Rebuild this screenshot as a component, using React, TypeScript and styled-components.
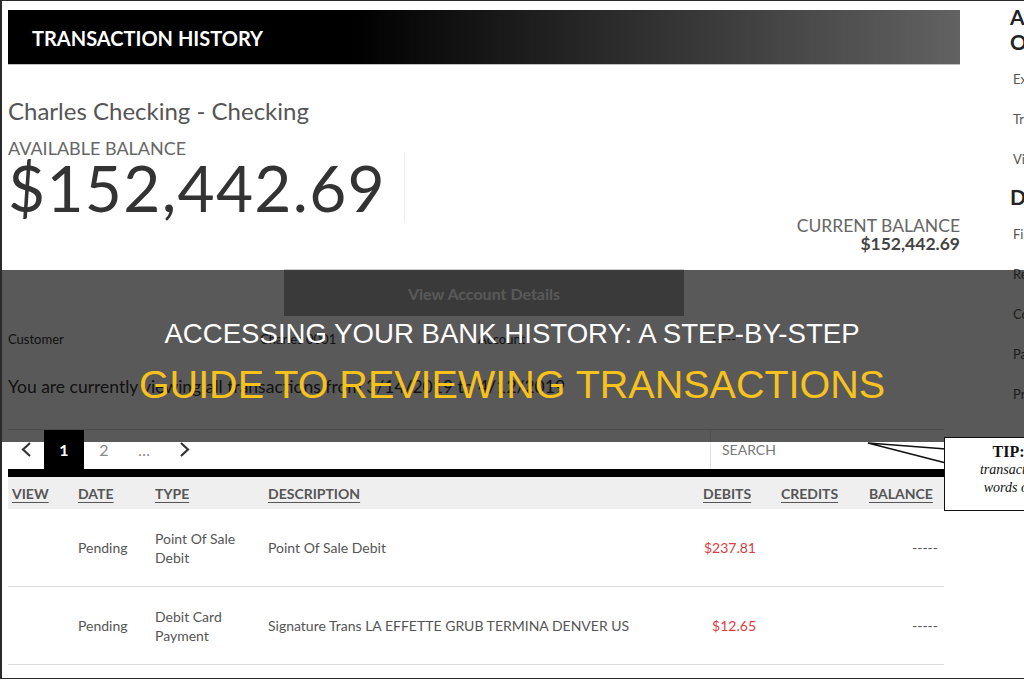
import React from "react";
import styled, { createGlobalStyle } from "styled-components";

const GlobalStyle = createGlobalStyle`
  html, body {
    margin: 0;
    padding: 0;
    overflow: hidden;
    background: #fff;
  }
  body {
    font-family: Lato, "Open Sans", sans-serif;
  }
  * {
    box-sizing: border-box;
  }
`;

const Page = styled.div`
  position: relative;
  display: flex;
  width: 1024px;
  height: 679px;
  border-top: 1px solid #2a2a2a;
  border-left: 2px solid #2a2a2a;
  border-bottom: 1px solid #2a2a2a;
  overflow: hidden;
  background: #fff;
`;

const Main = styled.main`
  display: flex;
  flex-direction: column;
  width: 952px;
  margin: 9px 0 0 6px;
  flex-shrink: 0;
`;

const HeaderBar = styled.header`
  display: flex;
  align-items: center;
  height: 55px;
  padding: 2px 0 0 24px;
  background: linear-gradient(90deg, #000 0%, #000 36%, #1e1e1e 55%, #444 80%, #626262 100%);
  border-bottom: 1px solid #bdbdbd;
  color: #fff;
  font-size: 20px;
  font-weight: 700;
`;

const AccountName = styled.h1`
  margin: 31px 0 0;
  font-size: 24px;
  line-height: 30px;
  font-weight: 400;
  color: #555;
`;

const Label = styled.div`
  margin-top: 13px;
  font-size: 18px;
  line-height: 18px;
  color: #666;
`;

const BalanceRow = styled.div`
  display: flex;
  align-items: flex-start;
`;

const BigAmount = styled.div`
  font-size: 64px;
  line-height: 62px;
  color: #333;
  letter-spacing: 1.3px;
`;

const Divider = styled.div`
  width: 1px;
  height: 70px;
  margin: -5px 0 0 18px;
  background: #ececec;
`;

const CurrentBalance = styled.div`
  margin-left: auto;
  padding-top: 60px;
  text-align: right;
  font-size: 17.5px;
  line-height: 17.5px;
  color: #666;

  strong {
    display: block;
    color: #444;
  }
`;

const DetailsButton = styled.button`
  align-self: center;
  width: 400px;
  height: 47px;
  margin-top: 17px;
  border: none;
  border-top: 1px solid #d0d0d0;
  background: #a6a6a6;
  color: #fff;
  font-family: Lato, sans-serif;
  font-size: 16px;
  font-weight: 700;
`;

const InfoRow = styled.div`
  display: flex;
  margin-top: 15px;
  font-size: 13px;
  line-height: 16px;
  color: #333;
`;

const InfoCell = styled.span<{ $w: number }>`
  width: ${(p) => p.$w}px;
`;

const Notice = styled.p`
  margin: 29px 0 0;
  font-size: 17.5px;
  line-height: 22px;
  color: #333;
`;

const Pager = styled.nav`
  display: flex;
  align-items: center;
  width: 936px;
  height: 40px;
  margin-top: 31px;
  border-top: 1px solid #d6d6d6;
`;

const PageCell = styled.span<{ $active?: boolean; $w?: number }>`
  display: flex;
  align-items: center;
  justify-content: center;
  width: ${(p) => p.$w ?? 40}px;
  height: 40px;
  font-size: 16px;
  font-weight: ${(p) => (p.$active ? 700 : 400)};
  color: ${(p) => (p.$active ? "#fff" : "#888")};
  background: ${(p) => (p.$active ? "#000" : "transparent")};
`;

const Search = styled.div`
  display: flex;
  align-items: center;
  width: 234px;
  height: 40px;
  margin-left: auto;
  padding: 0 0 0 11px;
  border-left: 1px solid #e2e2e2;
  font-size: 14px;
  color: #777;
`;

const Table = styled.div`
  width: 936px;
  border-top: 8px solid #000;
`;

const Row = styled.div<{ $head?: boolean }>`
  display: grid;
  grid-template-columns: 66px 77px 113px 435px 78px 88px 79px;
  align-items: center;
  height: ${(p) => (p.$head ? 32 : 78)}px;
  background: ${(p) => (p.$head ? "#efefef" : "#fff")};
  border-bottom: ${(p) => (p.$head ? "none" : "1px solid #dcdcdc")};
  font-size: 14px;
  line-height: 19px;
  color: #555;
`;

const HeadCell = styled.span`
  padding-left: 4px;
  font-weight: 700;
  text-decoration: underline;
  text-underline-offset: 3px;
`;

const Cell = styled.span<{ $right?: boolean; $red?: boolean; $pr?: number }>`
  padding-left: 4px;
  padding-right: ${(p) => p.$pr ?? 0}px;
  text-align: ${(p) => (p.$right ? "right" : "left")};
  color: ${(p) => (p.$red ? "#e03a3e" : "inherit")};
`;

const Sidebar = styled.aside`
  width: 110px;
  margin-left: 50px;
  padding-top: 3px;
  flex-shrink: 0;
`;

const SideHeading = styled.h2`
  margin: 0;
  font-size: 21px;
  line-height: 25px;
  font-weight: 700;
  color: #222;

  & + ul {
    margin-top: 17px;
  }
`;

const SideList = styled.ul`
  display: flex;
  flex-direction: column;
  gap: 24px;
  margin: 0 0 17px;
  padding: 0 0 0 3px;
  list-style: none;
  font-size: 13px;
  line-height: 16px;
  color: #555;
  white-space: nowrap;
`;

const Overlay = styled.div`
  position: absolute;
  top: 269px;
  left: -2px;
  right: 0;
  height: 172px;
  display: flex;
  flex-direction: column;
  align-items: center;
  justify-content: center;
  gap: 13px;
  padding-top: 10px;
  background: rgba(0, 0, 0, 0.65);
  font-family: "Liberation Sans", Arial, sans-serif;
  text-align: center;
`;

const OverlayTitle = styled.div`
  font-size: 27.6px;
  line-height: 32px;
  color: #fff;
`;

const OverlaySub = styled.div`
  font-size: 39.5px;
  line-height: 42px;
  color: #f8c21c;
`;

const TipBox = styled.div`
  position: absolute;
  top: 436px;
  left: 942px;
  width: 180px;
  height: 74px;
  padding-top: 5px;
  border: 1.5px solid #111;
  background: #fff;
  font-family: "Liberation Serif", "Times New Roman", serif;
  text-align: center;
  color: #111;
  font-size: 14px;
  line-height: 18px;

  b {
    display: block;
    font-size: 16px;
  }

  i {
    display: block;
  }
`;

const TipPointer = styled.svg`
  position: absolute;
  top: 440px;
  left: 864px;
`;

function Chevron({ dir }: { dir: "left" | "right" }) {
  const d = dir === "left" ? "M9 1 L2 7.5 L9 14" : "M2 1 L9 7.5 L2 14";
  return (
    <svg width="11" height="15" viewBox="0 0 11 15">
      <path d={d} fill="none" stroke="#333" strokeWidth="2.2" />
    </svg>
  );
}

const transactions = [
  {
    date: "Pending",
    type: ["Point Of Sale", "Debit"],
    desc: "Point Of Sale Debit",
    debit: "$237.81",
    balance: "-----",
  },
  {
    date: "Pending",
    type: ["Debit Card", "Payment"],
    desc: "Signature Trans LA EFFETTE GRUB TERMINA DENVER US",
    debit: "$12.65",
    balance: "-----",
  },
];

export default function App() {
  return (
    <>
      <GlobalStyle />
      <Page>
        <Main>
          <HeaderBar>TRANSACTION HISTORY</HeaderBar>
          <AccountName>Charles Checking - Checking</AccountName>
          <Label>AVAILABLE BALANCE</Label>
          <BalanceRow>
            <BigAmount>$152,442.69</BigAmount>
            <Divider />
            <CurrentBalance>
              CURRENT BALANCE
              <strong>$152,442.69</strong>
            </CurrentBalance>
          </BalanceRow>
          <DetailsButton>View Account Details</DetailsButton>
          <InfoRow>
            <InfoCell $w={252}>Customer</InfoCell>
            <InfoCell $w={218}>Charles 0001</InfoCell>
            <InfoCell $w={234}>Account</InfoCell>
            <InfoCell $w={100}>-----</InfoCell>
          </InfoRow>
          <Notice>
            You are currently viewing all transactions from 3/14/2019 to 4/12/2019
          </Notice>
          <Pager>
            <PageCell $w={36}>
              <Chevron dir="left" />
            </PageCell>
            <PageCell $active>1</PageCell>
            <PageCell>2</PageCell>
            <PageCell>…</PageCell>
            <PageCell>
              <Chevron dir="right" />
            </PageCell>
            <Search>SEARCH</Search>
          </Pager>
          <Table>
            <Row $head>
              <HeadCell>VIEW</HeadCell>
              <HeadCell>DATE</HeadCell>
              <HeadCell>TYPE</HeadCell>
              <HeadCell>DESCRIPTION</HeadCell>
              <HeadCell>DEBITS</HeadCell>
              <HeadCell>CREDITS</HeadCell>
              <HeadCell>BALANCE</HeadCell>
            </Row>
            {transactions.map((t) => (
              <Row key={t.desc}>
                <Cell />
                <Cell>{t.date}</Cell>
                <Cell>
                  {t.type[0]}
                  <br />
                  {t.type[1]}
                </Cell>
                <Cell>{t.desc}</Cell>
                <Cell $right $red $pr={21}>
                  {t.debit}
                </Cell>
                <Cell />
                <Cell $right $pr={6}>
                  {t.balance}
                </Cell>
              </Row>
            ))}
          </Table>
        </Main>
        <Sidebar>
          <SideHeading>Account Options</SideHeading>
          <SideList>
            <li>Export</li>
            <li>Transfer</li>
            <li>View Statements</li>
          </SideList>
          <SideHeading>Documents</SideHeading>
          <SideList>
            <li>Find ATM</li>
            <li>Rewards</li>
            <li>Contact Us</li>
            <li>Pay Bills</li>
            <li>Profile</li>
          </SideList>
        </Sidebar>
        <Overlay>
          <OverlayTitle>ACCESSING YOUR BANK HISTORY: A STEP-BY-STEP</OverlayTitle>
          <OverlaySub>GUIDE TO REVIEWING TRANSACTIONS</OverlaySub>
        </Overlay>
        <TipPointer width="84" height="26" viewBox="0 0 84 26">
          <polygon points="80,8 2,2 80,22" fill="#fff" stroke="#111" strokeWidth="1.5" />
          <rect x="79" y="9" width="6" height="12" fill="#fff" />
        </TipPointer>
        <TipBox>
          <b>TIP: Search</b>
          <i>transactions by key</i>
          <i>words or amounts</i>
        </TipBox>
      </Page>
    </>
  );
}
